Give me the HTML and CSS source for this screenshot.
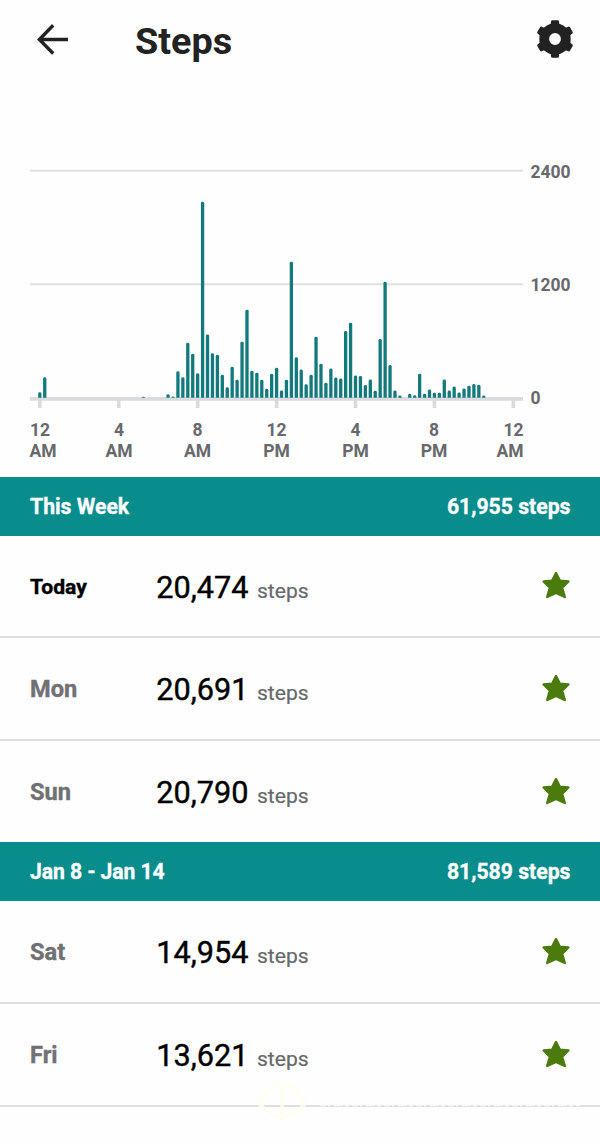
FILE: index.html
```html
<!DOCTYPE html>
<html lang="en">
  <head>
    <meta charset="utf-8" />
    <title>Steps</title>
    <link rel="stylesheet" href="styles.css">
  </head>
  <body>
    <header class="topbar">
      <svg class="back" width="32" height="32" viewBox="0 0 32 32">
        <path d="M31 16.5H3M16.2 2.3L2.3 16.5l13.9 14" />
      </svg>
      <h1>Steps</h1>
      <svg class="gear" width="38" height="40" viewBox="-19 -20 38 40">
        <circle r="10.8" />
        <g id="teeth"></g>
      </svg>
    </header>

    <svg class="chart" width="600" height="320" viewBox="0 156 600 320">
      <path class="grid" d="M30 170.8h493M30 284.3h493" />
      <path class="axis" d="M30 398.9h493" />
      <g id="ticks"></g>
      <g id="bars"></g>
      <g class="scale">
        <text x="530.5" y="177.5">2400</text>
        <text x="530.5" y="291">1200</text>
        <text x="530.5" y="404.4">0</text>
      </g>
      <g class="hours">
        <text x="40" y="435.6">12</text><text x="43" y="456.6">AM</text>
        <text x="119" y="435.6">4</text><text x="119" y="456.6">AM</text>
        <text x="197.5" y="435.6">8</text><text x="197.5" y="456.6">AM</text>
        <text x="276.5" y="435.6">12</text><text x="276.5" y="456.6">PM</text>
        <text x="355.5" y="435.6">4</text><text x="355.5" y="456.6">PM</text>
        <text x="434" y="435.6">8</text><text x="434" y="456.6">PM</text>
        <text x="513.5" y="435.6">12</text><text x="510" y="456.6">AM</text>
      </g>
    </svg>

    <div class="week"><span>This Week</span><span>61,955 steps</span></div>
    <div class="day today">
      <b>Today</b><span class="count">20,474</span><span class="unit">steps</span>
      <svg class="star" viewBox="0 0 28 28"><use href="#star" /></svg>
    </div>
    <div class="day">
      <b>Mon</b><span class="count">20,691</span><span class="unit">steps</span>
      <svg class="star" viewBox="0 0 28 28"><use href="#star" /></svg>
    </div>
    <div class="day last">
      <b>Sun</b><span class="count">20,790</span><span class="unit">steps</span>
      <svg class="star" viewBox="0 0 28 28"><use href="#star" /></svg>
    </div>
    <div class="week range"><span>Jan 8 - Jan 14</span><span>81,589 steps</span></div>
    <div class="day">
      <b>Sat</b><span class="count">14,954</span><span class="unit">steps</span>
      <svg class="star" viewBox="0 0 28 28"><use href="#star" /></svg>
    </div>
    <div class="day">
      <b>Fri</b><span class="count">13,621</span><span class="unit">steps</span>
      <svg class="star" viewBox="0 0 28 28"><use href="#star" /></svg>
    </div>

    <!-- faint mark over the last divider -->
    <svg class="mark" width="330" height="80" viewBox="255 1060 330 80">
      <path class="emblem" d="M259 1104q22-42 46 0q-22 24-46 0M282 1084v36" />
      <path class="smudge" d="M320 1105h260" />
    </svg>

    <svg class="defs" width="0" height="0">
      <defs>
        <path id="star" d="M14 2L17.8 9.6L26.4 10.5L20.2 16.7L22.8 26L14 21.8L5.2 26L7.8 16.7L1.6 10.5L10.2 9.6Z" />
      </defs>
    </svg>

    <script src="chart.js"></script>
  </body>
</html>
```
FILE: styles.css
```css
* {
  margin: 0;
  padding: 0;
  box-sizing: border-box;
}
body {
  width: 600px;
  height: 1142px;
  overflow: hidden;
  background: #fefefe;
  font-family: Roboto, "Liberation Sans", sans-serif;
}
.topbar {
  height: 156px;
  padding: 19px 26px 0 37px;
  display: flex;
  align-items: flex-start;
}
.back {
  margin-top: 4px;
  fill: none;
  stroke: #222;
  stroke-width: 3.4;
}
h1 {
  margin-left: 66px;
  flex: 1;
  font-size: 37.8px;
  line-height: 44px;
  font-weight: 700;
  color: #222;
}
.gear circle {
  fill: none;
  stroke: #222;
  stroke-width: 9.8;
}
.gear path {
  fill: #222;
  stroke: #222;
  stroke-width: 2.8;
  stroke-linejoin: round;
}
.chart {
  display: block;
}
.grid {
  stroke: #dedfe1;
  stroke-width: 2;
}
.axis {
  stroke: #dadbde;
  stroke-width: 3.6;
}
#ticks rect {
  fill: #dadbde;
}
#bars path {
  fill: #13797c;
}
.chart text {
  font-size: 17.5px;
  font-weight: 700;
  fill: #68696c;
}
.hours text {
  text-anchor: middle;
}
.week {
  height: 59px;
  padding: 1px 29.5px 0 30px;
  display: flex;
  justify-content: space-between;
  align-items: center;
  background: #088c8c;
  color: #fff;
  font-size: 21.2px;
  font-weight: 700;
  -webkit-text-stroke: 0.3px #fff;
}
.chart + .week {
  margin-top: 0.5px;
}
.week.range span:first-child {
  letter-spacing: -0.1px;
}
.day {
  height: 102.8px;
  padding: 0 30.5px 0 30px;
  display: flex;
  align-items: baseline;
  line-height: 104px;
  border-bottom: 2px solid #dfdfe0;
}
.day.today {
  height: 102.3px;
  line-height: 103px;
}
.day.last {
  height: 101.4px;
  border: 0;
}
.day b {
  width: 126.3px;
  font-size: 23.6px;
  line-height: 96px;
  color: #707174;
  -webkit-text-stroke: 0.4px #707174;
  transform: translateY(-3.5px);
}
.day.today b {
  font-size: 21.1px;
  color: #000;
  -webkit-text-stroke-color: #000;
  transform: translateY(-4.5px);
}
.count {
  width: 100.7px;
  font-size: 30.7px;
  color: #000;
  -webkit-text-stroke: 0.4px #000;
}
.unit {
  flex: 1;
  font-size: 21.1px;
  color: #68696c;
  -webkit-text-stroke: 0.2px #68696c;
}
.star {
  width: 28px;
  height: 28px;
  align-self: center;
  margin-bottom: 1px;
  fill: #4b7b0d;
  stroke: #4b7b0d;
  stroke-width: 2.4;
  stroke-linejoin: round;
}
.mark {
  position: absolute;
  left: 255px;
  top: 1060px;
  fill: none;
}
.emblem {
  stroke: #fffef2;
  stroke-width: 4;
  opacity: 0.8;
}
.smudge {
  stroke: #fdfdfd;
  stroke-width: 2.6;
  stroke-dasharray: 6 2 3 3 9 2 4 3;
  opacity: 0.75;
}
.defs {
  display: none;
}
```
FILE: chart.js
```js
var ns = "http://www.w3.org/2000/svg";

// height in px of every quarter of an hour, starting at midnight
var heights = {
  0: 5.5, 1: 20.5, 21: 1, 26: 3.5, 27: 1.2, 28: 26.5, 29: 20.5, 30: 55, 31: 44,
  32: 24.5, 33: 196, 34: 63.2, 35: 44.5, 36: 43, 37: 23, 38: 10.5, 39: 31,
  40: 18, 41: 56, 42: 88, 43: 27, 44: 25, 45: 18, 46: 9, 47: 24, 48: 30,
  49: 7.2, 50: 18, 51: 136, 52: 40.5, 53: 28.3, 54: 13.5, 55: 23, 56: 61,
  57: 34, 58: 15, 59: 29.3, 60: 20.3, 61: 19.3, 62: 66.7, 63: 75, 64: 22.3,
  65: 21.7, 66: 12.7, 67: 18.3, 68: 7, 69: 58.7, 70: 116, 71: 32.7, 72: 7.2,
  73: 2.2, 75: 4, 76: 2.5, 77: 24, 78: 4, 79: 8.3, 80: 5, 81: 5, 82: 18.3,
  83: 7.3, 84: 11.3, 85: 5.3, 86: 9.3, 87: 12, 88: 13.7, 89: 13, 90: 2.2
};
var left = 39.8;
var step = 4.933;
var base = 397.8;

function add(parent, tag, attrs) {
  var el = document.createElementNS(ns, tag);
  for (var key in attrs) {
    el.setAttribute(key, attrs[key]);
  }
  document.getElementById(parent).appendChild(el);
}

for (var i in heights) {
  var x = left + i * step - 1.65;
  var h = heights[i];
  var r = Math.min(1.4, h);
  add("bars", "path", {
    d: "M" + x + " " + base + "v" + (r - h) +
      "q0 " + -r + " 1.65 " + -r + "t1.65 " + r + "v" + (h - r) + "z"
  });
}

for (var t = 0; t <= 96; t += 16) {
  add("ticks", "rect", { x: left + t * step - 1.8, y: 400, width: 3.6, height: 8 });
}

for (var a = 0; a < 360; a += 60) {
  add("teeth", "path", {
    d: "M-2.6 -17.4H2.6L3 -14.4L6.4 -12H-6.4L-3 -14.4Z", transform: "rotate(" + a + ")"
  });
}
```
